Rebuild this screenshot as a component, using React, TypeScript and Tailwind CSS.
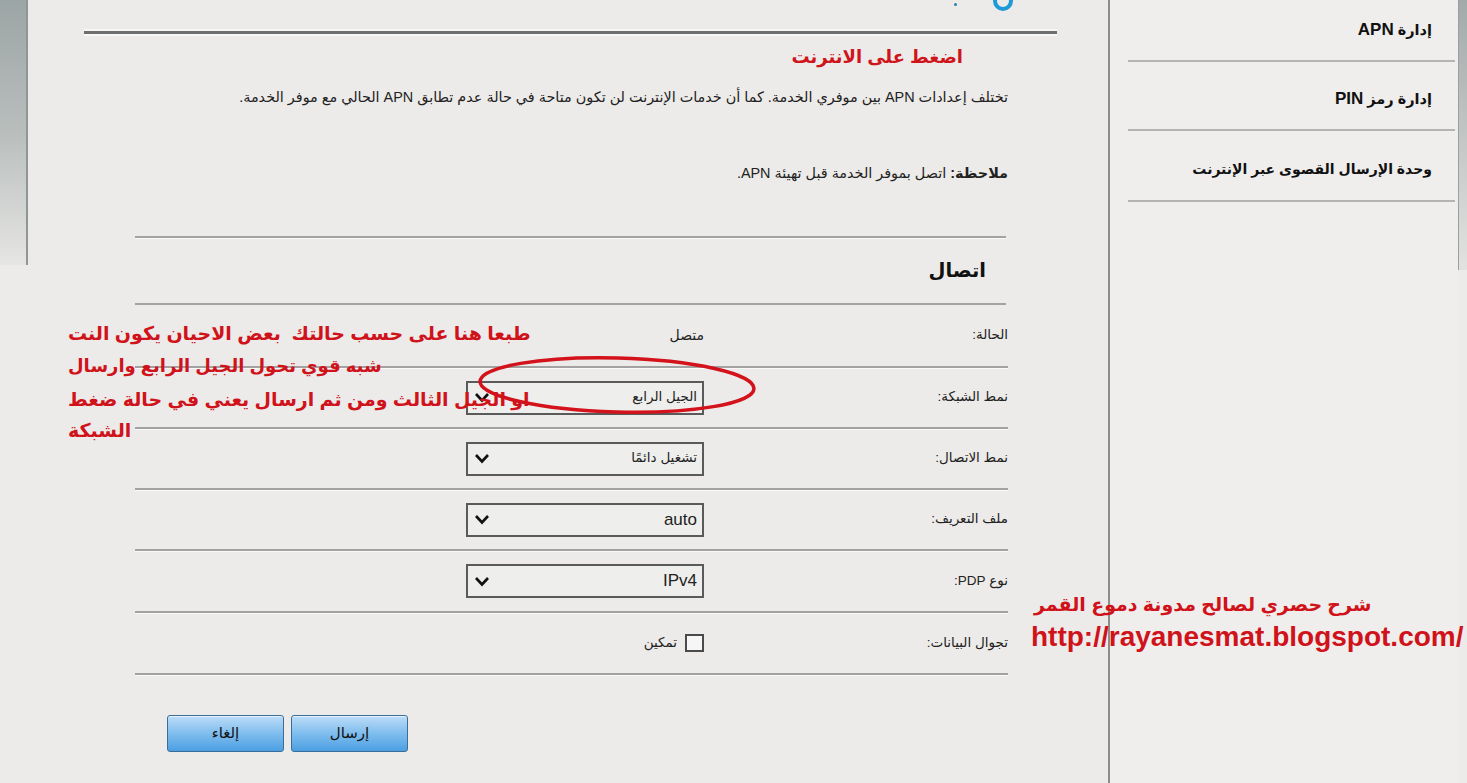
import React from "react";

const F = "font-['Liberation_Sans','DejaVu_Sans',sans-serif]";

function Chevron() {
  return (
    <svg width="16" height="11" viewBox="0 0 16 11">
      <polyline points="2,2 8,8.5 14,2" fill="none" stroke="#111" strokeWidth="2.6" strokeLinejoin="miter" />
    </svg>
  );
}

function Select({ value, latin }: { value: string; latin?: boolean }) {
  return (
    <div dir="ltr" className="w-[238px] h-[34px] border-2 border-[#5a5a5a] bg-[#eeeeec] flex items-center justify-between pl-[6px] pr-[5px]">
      <Chevron />
      <span className={latin ? "text-[17px] text-[#222]" : "text-[13.5px] text-[#222]"}>{value}</span>
    </div>
  );
}

function Row({ label, h, children }: { label: string; h: string; children: React.ReactNode }) {
  return (
    <div className={`${h} flex items-center border-b-2 border-[#a2a2a2] shadow-[0_1px_0_#f8f8f8]`}>
      <div className="w-[304px] text-[13.5px] text-[#222] shrink-0">{label}</div>
      <div className="flex items-center">{children}</div>
    </div>
  );
}

export default function App() {
  return (
    <div className={`relative w-[1467px] h-[783px] overflow-hidden bg-[#ecebe9] ${F} flex`}>
      {/* left strip */}
      <div className="w-[28px] shrink-0">
        <div className="h-[265px] bg-gradient-to-b from-[#9ca5a5] via-[#b9bebd] to-[#e6e6e4] border-r-2 border-[#8f9696]" />
      </div>

      {/* main */}
      <div dir="rtl" className="flex-1 flex flex-col">
        <div className="h-[31px] relative">
          <div className="absolute left-[965px] top-[-9px] w-[20px] h-[20px] rounded-full border-[4px] border-[#1f9ad8]" />
          <div className="absolute left-[926px] top-[3px] w-[3px] h-[3px] rounded-full bg-[#2b7fb5]" />
        </div>
        <div className="ml-[56px] mr-[51px] h-[3px] bg-[#6f6f6f] shadow-[0_2px_0_#f7f7f7,0_-2px_0_#f5f5f5]" />

        <div className="mr-[145px] mt-[10px] text-[18px] font-bold text-[#d0141b] leading-[26px]">اضغط على الانترنت</div>

        <div className="mr-[100px] mt-[17px] text-[14.4px] text-[#222] leading-[20px] whitespace-nowrap">
          تختلف إعدادات APN بين موفري الخدمة. كما أن خدمات الإنترنت لن تكون متاحة في حالة عدم تطابق APN الحالي مع موفر الخدمة.
        </div>

        <div className="mr-[100px] mt-[56px] text-[14.4px] text-[#222] leading-[20px]">
          <span className="font-bold">ملاحظة:</span> اتصل بموفر الخدمة قبل تهيئة APN.
        </div>

        {/* form section */}
        <div className="mr-[100px] ml-[107px] mt-[53px]">
          <div className="h-[2px] bg-[#a2a2a2] mr-[2px] shadow-[0_1px_0_#f8f8f8]" />
          <div className="h-[67px] flex items-center border-b-2 border-[#a2a2a2] mr-[2px] pr-[20px]">
            <span className="text-[19.5px] font-bold text-[#111]">اتصال</span>
          </div>

          <Row label="الحالة:" h="h-[63px]">
            <span className="text-[14px] text-[#222]">متصل</span>
          </Row>
          <Row label="نمط الشبكة:" h="h-[61px]">
            <Select value="الجيل الرابع" />
          </Row>
          <Row label="نمط الاتصال:" h="h-[61px]">
            <Select value="تشغيل دائمًا" />
          </Row>
          <Row label="ملف التعريف:" h="h-[61px]">
            <Select value="auto" latin />
          </Row>
          <Row label="نوع PDP:" h="h-[62px]">
            <Select value="IPv4" latin />
          </Row>
          <Row label="تجوال البيانات:" h="h-[62px]">
            <div className="flex items-center gap-[8px]">
              <div className="w-[19px] h-[18px] border-2 border-[#4a4a4a] bg-[#f6f6f6]" />
              <span className="text-[13.5px] text-[#222]">تمكين</span>
            </div>
          </Row>

          <div dir="ltr" className="mt-[40px] ml-[32px] flex gap-[7px]">
            <button className="w-[117px] h-[37px] rounded-[3px] border border-[#3a6e98] bg-gradient-to-b from-[#bcdcf6] via-[#7fbdee] to-[#4a9fe2] text-[15px] text-[#111] shadow-[inset_0_1px_0_#e6f3fd]">
              إلغاء
            </button>
            <button className="w-[117px] h-[37px] rounded-[3px] border border-[#3a6e98] bg-gradient-to-b from-[#bcdcf6] via-[#7fbdee] to-[#4a9fe2] text-[15px] text-[#111] shadow-[inset_0_1px_0_#e6f3fd]">
              إرسال
            </button>
          </div>
        </div>
      </div>

      {/* sidebar */}
      <div dir="rtl" className="w-[350px] shrink-0 border-l-2 border-[#8d8d8d] bg-[#efeeec] flex flex-col">
        <div className="h-[62px] flex items-end pb-[18px] pr-[23px] border-b-2 border-[#b4b4b4] ml-[18px] mr-[3px] text-[14.5px] font-bold text-[#111]">
          <span>إدارة <span className="text-[17px]">APN</span></span>
        </div>
        <div className="h-[69px] flex items-end pb-[18px] pr-[23px] border-b-2 border-[#b4b4b4] ml-[18px] mr-[3px] text-[14.5px] font-bold text-[#111]">
          <span>إدارة رمز <span className="text-[17px]">PIN</span></span>
        </div>
        <div className="h-[71px] flex items-end pb-[20px] pr-[23px] border-b-2 border-[#b4b4b4] ml-[18px] mr-[3px] text-[14px] font-bold text-[#111]">
          وحدة الإرسال القصوى عبر الإنترنت
        </div>
      </div>

      {/* right strip */}
      <div className="w-[9px] shrink-0">
        <div className="h-[270px] bg-gradient-to-b from-[#a3a9a9] to-[#e2e3e1] border-l border-[#9aa0a0]" />
      </div>

      {/* red annotations */}
      <svg className="absolute left-[476px] top-[352px] pointer-events-none" width="284" height="66" viewBox="0 0 284 66">
        <ellipse cx="141" cy="33" rx="137" ry="27" fill="none" stroke="#d3121b" strokeWidth="3.5" transform="rotate(1.5 141 33)" />
      </svg>
      <div dir="rtl" className="absolute left-[68px] top-[317px] text-[19px] font-bold text-[#d0121b] leading-[33px] whitespace-pre">
        <div className="w-[480px] text-left">طبعا هنا على حسب حالتك  بعض الاحيان يكون النت</div>
        <div className="w-[480px] text-left text-[18px]">شبه قوي تحول الجيل الرابع وارسال</div>
        <div className="w-[480px] text-left">او الجيل الثالث ومن ثم ارسال يعني في حالة ضغط</div>
        <div className="w-[480px] text-left -mt-[2px]">الشبكة</div>
      </div>
      <div dir="rtl" className="absolute left-[1034px] top-[590px] text-[19px] font-bold text-[#d0121b] leading-[30px] whitespace-nowrap">
        شرح حصري لصالح مدونة دموع القمر
      </div>
      <div className="absolute left-[1031px] top-[620px] text-[28px] font-bold text-[#d0121b] leading-[34px] whitespace-nowrap">
        http://rayanesmat.blogspot.com/
      </div>
    </div>
  );
}
